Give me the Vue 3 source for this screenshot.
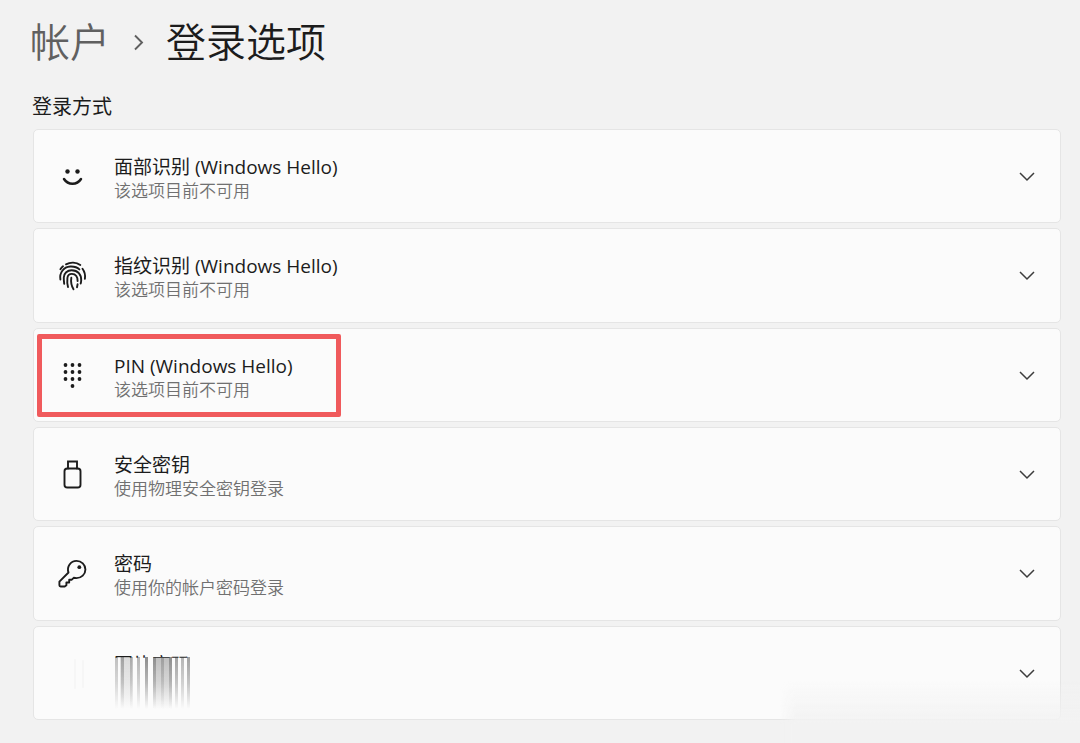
<script setup>
const options = [
  { id: 'face', title: '面部识别 (Windows Hello)', note: '该选项目前不可用' },
  { id: 'finger', title: '指纹识别 (Windows Hello)', note: '该选项目前不可用' },
  { id: 'pin', title: 'PIN (Windows Hello)', note: '该选项目前不可用', marked: true },
  { id: 'usb', title: '安全密钥', note: '使用物理安全密钥登录' },
  { id: 'key', title: '密码', note: '使用你的帐户密码登录' },
  { id: 'picture', title: '图片密码', faded: true },
]
const dots = [[7, 7], [14, 7], [21, 7], [7, 14], [14, 14], [21, 14], [7, 21], [14, 21], [21, 21], [14, 28]]
const streaks = [
  { x: 1, w: 3, o: 0.3 },
  { x: 6, w: 12, o: 0.16 },
  { x: 7, w: 3, o: 0.35 },
  { x: 16, w: 3, o: 0.3 },
  { x: 23, w: 3, o: 0.35 },
  { x: 31, w: 3, o: 0.55 },
  { x: 39, w: 19, o: 0.3 },
  { x: 39, w: 3, o: 0.35 },
  { x: 47, w: 3, o: 0.25 },
  { x: 55, w: 3, o: 0.35 },
  { x: 61, w: 3, o: 0.45 },
  { x: 67, w: 3, o: 0.35 },
  { x: 73, w: 3, o: 0.45 },
]
</script>

<template>
  <main class="page">
    <h1 class="crumbs">
      <a href="#accounts">帐户</a>
      <svg width="12" height="18" viewBox="0 0 12 18" aria-hidden="true">
        <path d="M2 2.500L9 9.500L2 16.500" fill="none" stroke="#606060" stroke-width="1.900" />
      </svg>
      <span>登录选项</span>
    </h1>
    <h2 class="section">登录方式</h2>
    <ul class="list">
      <li v-for="o in options" :key="o.id" class="item">
        <button type="button" class="card" aria-expanded="false">
          <svg class="icon" width="32" height="32" viewBox="0 0 32 32" aria-hidden="true" fill="none" stroke="#1c1c1c" stroke-width="2" stroke-linecap="round" stroke-linejoin="round">
            <template v-if="o.id === 'face'">
              <circle cx="10.500" cy="10.500" r="2.200" fill="#1c1c1c" stroke="none" />
              <circle cx="20.500" cy="10.500" r="2.200" fill="#1c1c1c" stroke="none" />
              <path d="M7 18C11 24.300 20 24.300 24 18" stroke-width="2.500" />
            </template>
            <g v-else-if="o.id === 'finger'" stroke-width="1.900">
              <path d="M9 4.300C13.300 2.100 19.200 2.200 23.300 5" />
              <path d="M3.400 9.200Q4.500 7.500 6 6.300" />
              <path d="M3.400 19.500C2.200 13 6.500 6.900 13.300 6.500C17.500 6.300 20.400 7.400 22.400 9.400" />
              <path d="M25.500 8.700C27.700 11.700 28.500 15 27.900 18.800" />
              <path d="M7.200 23.800C6.800 21 6.700 19.500 6.800 17.500C6.900 13.200 10.300 10.200 14.700 10.200C20.800 10.200 24.500 14.600 24.200 20.500Q24.100 22.200 23.700 23.600" />
              <path d="M11 27C10.100 24 10.100 21 10.400 18C10.700 15.300 12.500 13.900 14.900 13.900C18.900 13.900 20.800 17 20.600 21" />
              <path d="M20.600 24.300L20 27.200" />
              <path d="M14.300 17.800C13.700 21.600 14.300 25.500 16.500 29.200" />
            </g>
            <g v-else-if="o.id === 'pin'" fill="#1c1c1c" stroke="none" transform="translate(1.500 -2)">
              <circle v-for="(d, i) in dots" :key="i" :cx="d[0]" :cy="d[1]" r="1.900" />
            </g>
            <g v-else-if="o.id === 'usb'" stroke-width="1.900">
              <rect x="7.500" y="9.500" width="16" height="19" rx="2.800" />
              <path d="M11 9.500V2.500H20V9.500" stroke-linejoin="miter" />
            </g>
            <g v-else-if="o.id === 'key'" stroke-width="1.900">
              <path d="M19.500 2.900C24.400 2.900 28.400 6.700 28.400 11.500C28.400 16.500 24.300 20.100 19.500 20.100L16.700 19.800L14.800 21.700H12.200V24.500H9.400V27.200L7.700 28.500H3.600Q2.400 28.500 2.400 27.300V23.700L11.500 14.500C9.400 8.500 13.800 2.900 19.500 2.900Z" />
              <circle cx="22.300" cy="9.200" r="1.900" fill="#1c1c1c" stroke="none" />
            </g>
            <g v-else stroke="#f6f6f6">
              <path d="M18 2V30M26 3V29" />
            </g>
          </svg>
          <span v-if="o.faded" class="faded">
            <span class="title sliver">{{ o.title }}</span>
            <svg class="streaks" width="78" height="52" viewBox="0 0 78 52" aria-hidden="true">
              <defs>
                <linearGradient id="fade" x1="0" y1="0" x2="0" y2="1">
                  <stop offset="0" stop-color="#333" />
                  <stop offset="0.500" stop-color="#333" stop-opacity="0.600" />
                  <stop offset="1" stop-color="#333" stop-opacity="0" />
                </linearGradient>
              </defs>
              <rect v-for="(s, i) in streaks" :key="i" :x="s.x" y="0" :width="s.w" height="52" fill="url(#fade)" :opacity="s.o" />
            </svg>
          </span>
          <span v-else class="text">
            <span class="title">{{ o.title }}</span>
            <span class="note">{{ o.note }}</span>
          </span>
          <svg class="chevron" width="18" height="12" viewBox="0 0 18 12" aria-hidden="true">
            <path d="M2 2L9 9L16 2" fill="none" stroke="#3c3c3c" stroke-width="1.500" />
          </svg>
        </button>
        <span v-if="o.marked" class="mark"></span>
        <span v-if="o.faded" class="haze"></span>
      </li>
    </ul>
  </main>
</template>

<style>
body {
  margin: 0;
  background: #f2f2f2;
}
</style>

<style scoped>
.page {
  box-sizing: border-box;
  display: flex;
  flex-direction: column;
  min-height: 100vh;
  padding: 14px 19px 23px 33px;
  color: #1c1c1c;
  font-family: "Open Sans", "Noto Sans CJK SC", sans-serif;
}
.crumbs {
  display: flex;
  align-items: center;
  margin: 0 0 0 -3px;
  font-size: 40px;
  line-height: 56px;
  font-weight: 350;
}
.crumbs a {
  width: 76px;
  color: #606060;
  text-decoration: none;
  white-space: nowrap;
}
.crumbs svg {
  margin: 0 21px 0 27px;
}
.section {
  margin: 22px 0 8px -1px;
  font-size: 20px;
  line-height: 29px;
  font-weight: 400;
}
.list {
  flex: 1;
  display: grid;
  grid-auto-rows: 1fr;
  gap: 5px;
  margin: 0;
  padding: 0;
  list-style: none;
}
.item {
  position: relative;
  display: flex;
}
.card {
  flex: 1;
  display: flex;
  align-items: center;
  padding: 10px 24px 8px 23px;
  border: 1px solid #e5e5e5;
  border-radius: 5px;
  background: #fbfbfb;
  color: inherit;
  font: inherit;
  text-align: left;
}
.icon {
  flex: none;
  margin-right: 25px;
}
.text {
  flex: 1;
  display: flex;
  flex-direction: column;
  padding-top: 2px;
}
.title {
  font-size: 19px;
  line-height: 26px;
}
.note {
  color: #707070;
  font-size: 17px;
  line-height: 22px;
  font-weight: 350;
}
.chevron {
  flex: none;
}
.faded {
  position: relative;
  flex: 1;
  padding: 4px 0 22px;
}
.sliver {
  display: block;
  clip-path: inset(0 0 20px 0);
}
.streaks {
  position: absolute;
  top: 9px;
  left: 0;
  filter: blur(0.6px);
}
.mark {
  position: absolute;
  top: 6px;
  left: 4px;
  box-sizing: border-box;
  width: 304px;
  height: 83px;
  border: 5px solid #f05a5c;
  border-radius: 2px;
  pointer-events: none;
}
.haze {
  position: absolute;
  right: -19px;
  bottom: -23px;
  width: 300px;
  height: 62px;
  background: linear-gradient(to bottom, #f2f2f200, #f2f2f2 70%);
  mask-image: linear-gradient(to right, transparent, #000 16px);
  pointer-events: none;
}
</style>
